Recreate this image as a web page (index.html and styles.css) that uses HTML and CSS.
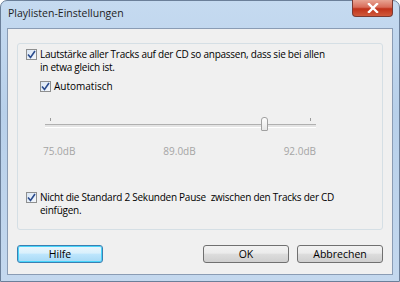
FILE: index.html
```html
<!DOCTYPE html>
<html>
<head>
    <meta charset="UTF-8">
    <title>Playlisten-Einstellungen</title>
    <link rel="stylesheet" href="styles.css">
</head>
<body>
    <div class="window">
        <div class="titlebar">
            <span class="title">Playlisten-Einstellungen</span>
            <div class="close-btn">
                <svg width="12" height="10" viewBox="0 0 12 10"><path d="M2 1 L10 9 M10 1 L2 9" stroke="#fff" stroke-width="2.4" stroke-linecap="square"/></svg>
            </div>
        </div>

        <div class="client">
            <div class="group">
                <div class="check-row">
                    <span class="checkbox"><svg width="9" height="9" viewBox="0 0 9 9"><path d="M1 4.5 L3.5 7.5 L8 1" fill="none" stroke="#2a4b8d" stroke-width="1.6"/></svg></span>
                    <span class="check-label wide">Lautstärke aller Tracks auf der CD so anpassen, dass sie bei allen in etwa gleich ist.</span>
                </div>
                <div class="check-row sub">
                    <span class="checkbox"><svg width="9" height="9" viewBox="0 0 9 9"><path d="M1 4.5 L3.5 7.5 L8 1" fill="none" stroke="#2a4b8d" stroke-width="1.6"/></svg></span>
                    <span class="check-label">Automatisch</span>
                </div>

                <!-- Slider -->
                <div class="slider">
                    <div class="ticks">
                        <span class="tick"></span>
                        <span class="tick"></span>
                    </div>
                    <div class="track">
                        <div class="thumb" style="left: 216px"></div>
                    </div>
                </div>
                <div class="scale-labels">
                    <span>75.0dB</span>
                    <span>89.0dB</span>
                    <span>92.0dB</span>
                </div>

                <div class="check-row last">
                    <span class="checkbox"><svg width="9" height="9" viewBox="0 0 9 9"><path d="M1 4.5 L3.5 7.5 L8 1" fill="none" stroke="#2a4b8d" stroke-width="1.6"/></svg></span>
                    <span class="check-label wider">Nicht die Standard 2 Sekunden Pause &nbsp;zwischen den Tracks der CD einfügen.</span>
                </div>
            </div>

            <div class="buttons">
                <button class="btn btn-default">Hilfe</button>
                <div class="btn-group">
                    <button class="btn">OK</button>
                    <button class="btn">Abbrechen</button>
                </div>
            </div>
        </div>
    </div>
</body>
</html>
```

FILE: styles.css
```css
body {
    margin: 0;
    background-color: #fff;
    font-family: "Open Sans", "Noto Sans", Arial, sans-serif;
}

.window {
    width: 400px;
    height: 282px;
    box-sizing: border-box;
    background: linear-gradient(to bottom, #c5daf0 0%, #b8d0ea 40%, #c4d8ee 100%);
    border: 1px solid #6b7f99;
    border-radius: 7px 7px 0 0;
    display: flex;
    flex-direction: column;
}

.titlebar {
    height: 27px;
    display: flex;
    justify-content: space-between;
    align-items: flex-start;
    padding: 0 6px 0 7px;
}

.title {
    margin-top: 5px;
    font-size: 10.5px;
    color: #1e1e1e;
}

.close-btn {
    width: 41px;
    height: 17px;
    margin-top: -1px;
    box-sizing: border-box;
    border: 1px solid #7a3a33;
    border-top: none;
    border-radius: 0 0 4px 4px;
    background: linear-gradient(to bottom, #e8a493 0%, #d86c59 45%, #c0321a 55%, #d05a3c 100%);
    display: flex;
    align-items: center;
    justify-content: center;
}

.client {
    margin: 0 6px 0 6px;
    height: 247px;
    box-sizing: border-box;
    background-color: #f0f0f0;
    border: 1px solid #8a9cb4;
    padding: 14px 9px 0 9px;
}

.group {
    height: 187px;
    box-sizing: border-box;
    border: 1px solid #d5dfe5;
    border-radius: 3px;
    padding: 4px 10px 0 8px;
    font-size: 10px;
    color: #000;
}

.check-row {
    display: flex;
    align-items: flex-start;
    gap: 3px;
    line-height: 13px;
}

.check-label.wide,
.check-label.wider {
    max-width: 285px;
    letter-spacing: -0.25px;
}

.check-label.wider {
    max-width: 310px;
}

.check-row .checkbox {
    margin-top: 1px;
}

.check-row.sub {
    margin-top: 6px;
    margin-left: 14px;
}

.check-row.last {
    margin-top: 33px;
}

.checkbox {
    width: 11px;
    height: 11px;
    flex-shrink: 0;
    box-sizing: border-box;
    border: 1px solid #8e8f8f;
    background: linear-gradient(135deg, #d9e6f5 0%, #f4f7fb 100%);
    display: flex;
    align-items: center;
    justify-content: center;
}

.slider {
    margin: 22px 0 0 19px;
    width: 271px;
}

.ticks {
    display: flex;
    justify-content: space-between;
    padding: 0 5px 0 5px;
    height: 9px;
}

.tick {
    width: 1px;
    height: 3px;
    margin-top: 3px;
    background-color: #9a9a9a;
}

.track {
    position: relative;
    height: 2px;
    border-top: 1px solid #b0b0b0;
    background-color: #e4e4e4;
    border-bottom: 1px solid #fff;
}

.thumb {
    position: absolute;
    top: -8px;
    width: 7px;
    height: 14px;
    box-sizing: border-box;
    border: 1px solid #a0a0a0;
    border-radius: 3px 3px 1px 1px;
    background: linear-gradient(to bottom, #fdfdfd, #e6e6e6);
}

.scale-labels {
    display: flex;
    justify-content: space-between;
    width: 273px;
    margin: 16px 0 0 17px;
    color: #a5a5a5;
    font-size: 10px;
}

.buttons {
    display: flex;
    justify-content: space-between;
    margin-top: 15px;
}

.btn-group {
    display: flex;
    gap: 8px;
}

.btn {
    width: 86px;
    height: 18px;
    padding: 0;
    font-family: "Open Sans", "Noto Sans", Arial, sans-serif;
    font-size: 10.5px;
    color: #000;
    border: 1px solid #707070;
    border-radius: 3px;
    background: linear-gradient(to bottom, #f2f2f2 0%, #ebebeb 45%, #dddddd 50%, #cfcfcf 100%);
}

.btn-default {
    border-color: #3c7fb1;
    box-shadow: inset 0 0 0 1px #48d5fb;
    background: linear-gradient(to bottom, #eaf6fd 0%, #d9f0fc 45%, #bee6fd 50%, #a7d9f5 100%);
}
```
